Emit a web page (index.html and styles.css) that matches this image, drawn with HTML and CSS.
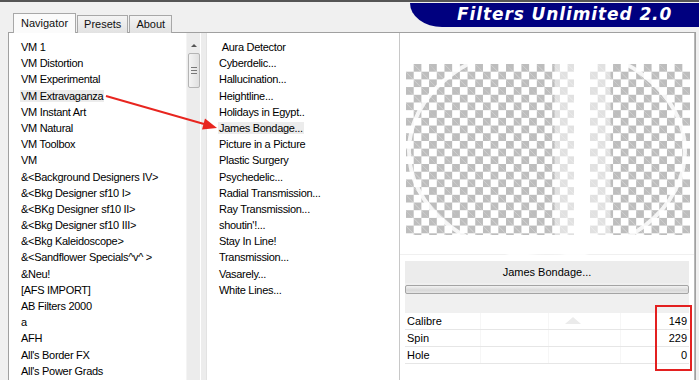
FILE: index.html
```html
<!DOCTYPE html>
<html lang="en">
<head>
<meta charset="utf-8">
<title>Filters Unlimited 2.0</title>
<link rel="stylesheet" href="styles.css">
</head>
<body>
<div class="app">
  <!-- header: tabs + banner -->
  <div class="header">
    <div class="tabs">
      <div class="tab active">Navigator</div>
      <div class="tab">Presets</div>
      <div class="tab">About</div>
    </div>
    <div class="banner">Filters Unlimited 2.0</div>
  </div>

  <!-- main pane -->
  <div class="pane">
    <ul class="list cats">
      <li>VM 1</li>
      <li>VM Distortion</li>
      <li>VM Experimental</li>
      <li><span class="hl">VM Extravaganza</span></li>
      <li>VM Instant Art</li>
      <li>VM Natural</li>
      <li>VM Toolbox</li>
      <li>VM</li>
      <li>&amp;&lt;Background Designers IV&gt;</li>
      <li>&amp;&lt;Bkg Designer sf10 I&gt;</li>
      <li>&amp;&lt;BKg Designer sf10 II&gt;</li>
      <li>&amp;&lt;Bkg Designer sf10 III&gt;</li>
      <li>&amp;&lt;Bkg Kaleidoscope&gt;</li>
      <li>&amp;&lt;Sandflower Specials^v^ &gt;</li>
      <li>&amp;Neu!</li>
      <li>[AFS IMPORT]</li>
      <li>AB Filters 2000</li>
      <li>a</li>
      <li>AFH</li>
      <li>All's Border FX</li>
      <li>All's Power Grads</li>
    </ul>
    <div class="scroll">
      <div class="arrow-up"></div>
      <div class="thumb"><span class="grip"></span></div>
    </div>
    <div class="gutter"></div>
    <ul class="list filters">
      <li>&nbsp;Aura Detector</li>
      <li>Cyberdelic...</li>
      <li>Hallucination...</li>
      <li>Heightline...</li>
      <li>Holidays in Egypt..</li>
      <li><span class="hl">James Bondage...</span></li>
      <li>Picture in a Picture</li>
      <li>Plastic Surgery</li>
      <li>Psychedelic...</li>
      <li>Radial Transmission...</li>
      <li>Ray Transmission...</li>
      <li>shoutin'!...</li>
      <li>Stay In Line!</li>
      <li>Transmission...</li>
      <li>Vasarely...</li>
      <li>White Lines...</li>
    </ul>

    <div class="side">
      <div class="preview">
        <div class="checker before"></div>
        <div class="checker after"></div>
        <svg class="ring" width="295" height="222" viewBox="0 0 295 222">
          <ellipse cx="147" cy="118" rx="138" ry="106" fill="none" stroke="#fff" stroke-width="4" opacity=".85"/>
        </svg>
      </div>
      <div class="controls">
        <div class="filter-btn">James Bondage...</div>
        <div class="gray-band">
          <div class="progress"></div>
          <div class="pointer"></div>
        </div>
        <div class="params">
          <div class="param"><span>Calibre</span><span>149</span></div>
          <div class="param"><span>Spin</span><span>229</span></div>
          <div class="param"><span>Hole</span><span>0</span></div>
        </div>
      </div>
    </div>
  </div>

  <!-- annotations -->
  <svg class="annot" width="699" height="380" viewBox="0 0 699 380">
    <line x1="106" y1="96" x2="204" y2="124" stroke="#e8251f" stroke-width="2"/>
    <polygon points="217,128 202,129.5 205,118.5" fill="#e8251f"/>
  </svg>
  <div class="redbox"></div>
</div>
</body>
</html>
```

FILE: styles.css
```css
/* ---------- Base ---------- */
*{margin:0;padding:0;box-sizing:border-box}
html,body{width:699px;height:380px;overflow:hidden}
body{background:#f0f0f0;font-family:"Liberation Sans",Arial,sans-serif;font-size:11px;color:#000}
.app{position:relative;width:699px;height:380px;border-top:2px solid #555;display:flex;flex-direction:column}
/* ---------- Header ---------- */
.header{display:flex;height:30px;padding-left:13px}
.tabs{display:flex;align-items:flex-end;gap:1px;align-self:flex-end;margin-bottom:-1px;position:relative;z-index:1}
.tab{height:18px;padding:0 6px;line-height:16px;border:1px solid #a8a8a8;border-bottom:none;
  background:linear-gradient(#f4f4f4,#e2e2e2);color:#111}
.tab.active{height:20px;line-height:19px;background:#fbfbfb;padding:0 7px}
.banner{margin-left:auto;width:289px;height:24px;margin-top:1px;background:#00007f;color:#fff;
  border-bottom-left-radius:32px 24px;font-family:"DejaVu Sans",Verdana,sans-serif;font-weight:bold;
  font-style:italic;font-size:17px;line-height:23px;padding-left:47px;letter-spacing:.9px}
/* ---------- Pane ---------- */
.pane{flex:1;display:flex;margin:0 3px 0 8px;border:1px solid #a0a0a0;border-bottom:none;min-height:0}
.list{list-style:none;background:#fff;padding-top:6px;letter-spacing:-.3px}
.list li{height:16.2px;line-height:16px;white-space:nowrap}
.hl{background:#ececec;padding:0 1px;margin-left:-1px}
.cats{width:177px;padding-left:12px}
.filters{width:192px;padding-left:12px}
/* ---------- Scrollbar ---------- */
.scroll{width:14px;background:#ececec;border-left:1px solid #f4f4f4;display:flex;flex-direction:column;align-items:center}
.arrow-up{margin-top:11px;width:0;height:0;border-left:3px solid transparent;border-right:3px solid transparent;border-bottom:3px solid #555}
.thumb{margin-top:6px;width:12px;height:35px;border:1px solid #b4b4b4;border-radius:2px;background:linear-gradient(90deg,#f4f4f4,#e0e0e0);
  display:flex;align-items:center;justify-content:center}
.grip{width:6px;height:7px;border-top:1px solid #777;border-bottom:1px solid #777;position:relative}
.grip::after{content:"";position:absolute;left:0;right:0;top:2px;border-top:1px solid #777}
.gutter{width:7px;background:#ececec;border-left:1px solid #fff;border-right:1px solid #e2e2e2}
/* ---------- Right side ---------- */
.side{flex:1;background:#fff;border-left:1px solid #c8c8c8;border-right:1px solid #b8b8b8;display:flex;flex-direction:column}
.preview{position:relative;height:222px;display:flex;gap:16px;padding:31px 0 0 6px;border-bottom:1px solid #f0f0f0}
.checker{height:171px;background-color:#fff;
  background-image:linear-gradient(45deg,#bdbdbd 25%,transparent 25%,transparent 75%,#bdbdbd 75%),
  linear-gradient(45deg,#bdbdbd 25%,transparent 25%,transparent 75%,#bdbdbd 75%);
  background-size:15.4px 15.4px;background-position:0 0,7.7px 7.7px}
.before{width:168px;-webkit-mask-image:linear-gradient(90deg,#000 88%,rgba(0,0,0,.45) 89%);mask-image:linear-gradient(90deg,#000 88%,rgba(0,0,0,.45) 89%)}
.after{width:100px;-webkit-mask-image:linear-gradient(90deg,rgba(0,0,0,.45) 20%,#000 21%);mask-image:linear-gradient(90deg,rgba(0,0,0,.45) 20%,#000 21%)}
.ring{position:absolute;left:0;top:0}
.controls{padding:6px 5px 0;display:flex;flex-direction:column}
.filter-btn{height:22px;line-height:22px;text-align:center;background:#ececec}
.gray-band{background:#f0f0f0;height:30px;padding-top:2px;position:relative}
.progress{height:9px;border:1px solid #a4a4a4;border-radius:2px;background:linear-gradient(#f2f2f2,#d8d8d8 60%,#e6e6e6)}
.pointer{position:absolute;left:160px;bottom:-11px;width:0;height:0;border-left:8px solid transparent;border-right:8px solid transparent;border-bottom:7px solid #ebebeb}
.params{display:flex;flex-direction:column}
.param{height:17px;display:flex;justify-content:space-between;align-items:center;padding:0 2px;border-bottom:1px solid #e6e6e6;
  background:linear-gradient(90deg,transparent 75px,#f6f6f6 75px,#f6f6f6 76px,transparent 76px,transparent 143px,#f6f6f6 143px,#f6f6f6 144px,transparent 144px,transparent 215px,#f6f6f6 215px,#f6f6f6 216px,transparent 216px)}
/* ---------- Annotations ---------- */
.annot{position:absolute;left:0;top:-2px;pointer-events:none}
.redbox{position:absolute;left:655px;top:303px;width:37px;height:66px;border:2px solid #e32020}
```
